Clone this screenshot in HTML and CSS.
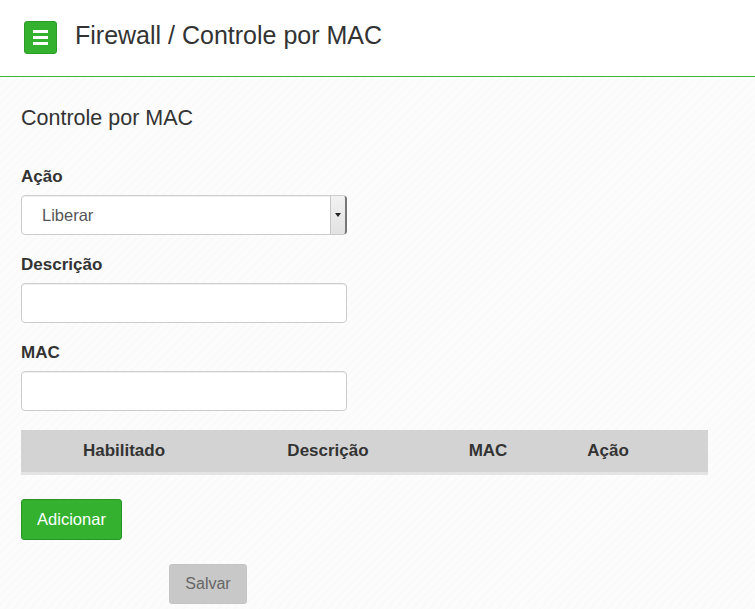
FILE: index.html
```html
<!DOCTYPE html>
<html lang="pt-BR">
<head>
    <meta charset="UTF-8">
    <meta name="viewport" content="width=device-width, initial-scale=1.0">
    <title>Firewall / Controle por MAC</title>
    <link rel="stylesheet" href="styles.css">
</head>
<body>
    <header class="topbar">
        <button class="menu-btn" type="button" aria-label="Menu">
            <span></span><span></span><span></span>
        </button>
        <h1>Firewall / Controle por MAC</h1>
    </header>

    <main class="content">
        <h2>Controle por MAC</h2>

        <div class="form-group">
            <label for="acao">Ação</label>
            <div class="select-wrap">
                <select id="acao" name="acao">
                    <option>Liberar</option>
                    <option>Bloquear</option>
                </select>
            </div>
        </div>
        <div class="form-group">
            <label for="descricao">Descrição</label>
            <input type="text" id="descricao" name="descricao">
        </div>
        <div class="form-group last">
            <label for="mac">MAC</label>
            <input type="text" id="mac" name="mac">
        </div>

        <div class="table-head">
            <span>Habilitado</span>
            <span>Descrição</span>
            <span>MAC</span>
            <span>Ação</span>
            <span></span>
        </div>

        <button class="btn-add" type="button">Adicionar</button>
        <div class="save-row">
            <button class="btn-save" type="button" disabled>Salvar</button>
        </div>
    </main>
</body>
</html>
```

FILE: styles.css
```css
body {
    margin: 0;
    font-family: "Liberation Sans", Arial, sans-serif;
    color: #333;
    background-color: #fcfcfc;
    background-image: repeating-linear-gradient(135deg, rgba(0,0,0,0.008) 0 2px, transparent 2px 6px);
}
.topbar {
    display: flex;
    align-items: center;
    height: 77px;
    padding-left: 24px;
    box-sizing: border-box;
    background: #fff;
    border-bottom: 1px solid #3db535;
}
.menu-btn {
    display: flex;
    flex-direction: column;
    justify-content: center;
    gap: 3px;
    width: 33px;
    height: 33px;
    margin-top: -1px;
    padding: 0 8px;
    background: #33b12f;
    border: 1px solid #2c9c29;
    border-radius: 3px;
}
.menu-btn span {
    display: block;
    height: 3px;
    background: #fff;
}
.topbar h1 {
    margin: -5px 0 0 18px;
    font-size: 25px;
    font-weight: normal;
    color: #333;
}
.content {
    padding: 29px 21px 0;
}
.content h2 {
    margin: 0 0 37px;
    font-size: 21.5px;
    font-weight: normal;
    line-height: 24px;
}
.form-group {
    margin-bottom: 20px;
}
.form-group.last {
    margin-bottom: 19px;
}
label {
    display: block;
    margin-bottom: 8px;
    font-size: 17px;
    font-weight: bold;
    line-height: 20px;
}
.select-wrap {
    position: relative;
    width: 326px;
}
select, input {
    display: block;
    width: 326px;
    height: 40px;
    box-sizing: border-box;
    padding: 0 20px;
    font-family: inherit;
    font-size: 16.5px;
    color: #555;
    background: #fff;
    border: 1px solid #ccc;
    border-radius: 4px;
    box-shadow: inset 0 1px 1px rgba(0,0,0,0.06);
}
select {
    appearance: none;
    -webkit-appearance: none;
}
.select-wrap::after {
    content: "";
    position: absolute;
    top: 1px;
    right: 0;
    width: 17px;
    height: 38px;
    background: #e9e9e9 linear-gradient(#f2f2f2, #e2e2e2);
    border-left: 1px solid #c8c8c8;
    border-right: 2px solid #777;
    border-radius: 0 3px 3px 0;
    box-sizing: border-box;
}
.select-wrap::before {
    content: "";
    position: absolute;
    z-index: 1;
    top: 18px;
    right: 6px;
    border-left: 3px solid transparent;
    border-right: 3px solid transparent;
    border-top: 4px solid #222;
}
.table-head {
    display: grid;
    grid-template-columns: 206px 202px 118px 122px 1fr;
    align-items: center;
    width: 687px;
    height: 42px;
    background: #d3d3d3;
    border-bottom: 3px solid #e3e3e3;
    font-size: 17px;
    font-weight: bold;
    text-align: center;
}
.btn-add {
    display: block;
    margin-top: 24px;
    width: 101px;
    height: 41px;
    font-family: inherit;
    font-size: 16.5px;
    color: #fff;
    background: #33b12f;
    border: 1px solid #2a9327;
    border-radius: 3px;
}
.save-row {
    padding: 24px 0 0 148px;
}
.btn-save {
    width: 78px;
    height: 40px;
    font-family: inherit;
    font-size: 16px;
    color: #666;
    background: #c8c8c8;
    border: 1px solid #c4c4c4;
    border-radius: 3px;
}
```
